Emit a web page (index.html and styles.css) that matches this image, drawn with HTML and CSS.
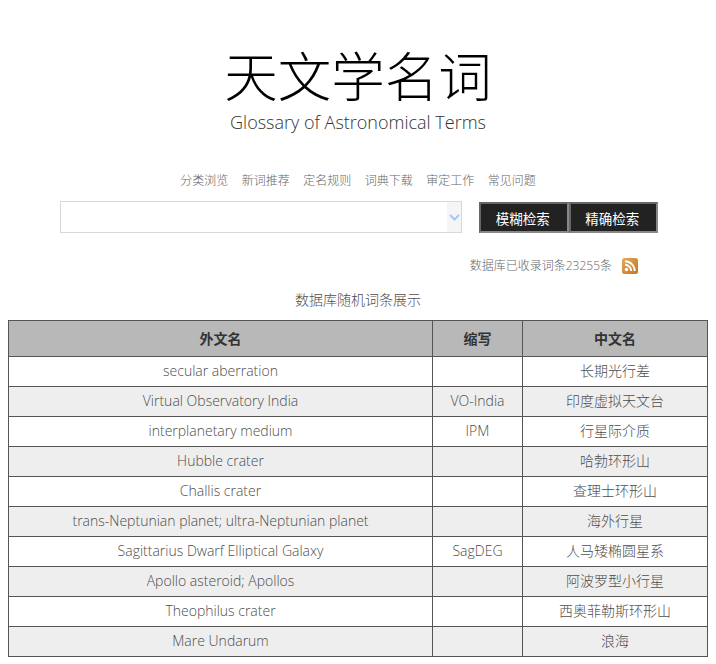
FILE: index.html
```html
<!DOCTYPE html>
<html lang="zh-CN">
<head>
  <meta charset="UTF-8">
  <title>天文学名词</title>
  <link rel="stylesheet" href="styles.css">
</head>
<body>
  <header class="masthead">
    <h1>天文学名词</h1>
    <p class="subtitle">Glossary of Astronomical Terms</p>
  </header>

  <nav class="main-nav">
    <a href="#">分类浏览</a>
    <a href="#">新词推荐</a>
    <a href="#">定名规则</a>
    <a href="#">词典下载</a>
    <a href="#">审定工作</a>
    <a href="#">常见问题</a>
  </nav>

  <form class="search-row">
    <div class="search-box">
      <input type="text" class="search-input">
      <span class="search-arrow">
        <svg width="11" height="7" viewBox="0 0 11 7"><path d="M1 1l4.500 4.500L10 1" fill="none" stroke="#a9c6f2" stroke-width="2"/></svg>
      </span>
    </div>
    <div class="search-buttons">
      <button type="button" class="search-btn">模糊检索</button>
      <button type="button" class="search-btn">精确检索</button>
    </div>
  </form>

  <div class="stats">
    <span>数据库已收录词条23255条</span>
    <svg class="rss" width="16" height="16" viewBox="0 0 16 16">
      <defs>
        <linearGradient id="rss-bg" x1="0" y1="0" x2="1" y2="1">
          <stop offset="0" stop-color="#e2a860"/>
          <stop offset="1" stop-color="#c4761f"/>
        </linearGradient>
      </defs>
      <rect width="16" height="16" rx="2.500" fill="url(#rss-bg)"/>
      <circle cx="4.500" cy="11.500" r="1.700" fill="#fff"/>
      <path d="M3 6.800a6.200 6.200 0 0 1 6.200 6.200M3 3.300a9.700 9.700 0 0 1 9.700 9.700" fill="none" stroke="#fff" stroke-width="2"/>
    </svg>
  </div>

  <h2 class="table-title">数据库随机词条展示</h2>

  <table class="terms">
    <thead>
      <tr><th class="col-en">外文名</th><th class="col-abbr">缩写</th><th>中文名</th></tr>
    </thead>
    <tbody>
      <tr><td>secular aberration</td><td></td><td>长期光行差</td></tr>
      <tr><td>Virtual Observatory India</td><td>VO-India</td><td>印度虚拟天文台</td></tr>
      <tr><td>interplanetary medium</td><td>IPM</td><td>行星际介质</td></tr>
      <tr><td>Hubble crater</td><td></td><td>哈勃环形山</td></tr>
      <tr><td>Challis crater</td><td></td><td>查理士环形山</td></tr>
      <tr><td>trans-Neptunian planet; ultra-Neptunian planet</td><td></td><td>海外行星</td></tr>
      <tr><td>Sagittarius Dwarf Elliptical Galaxy</td><td>SagDEG</td><td>人马矮椭圆星系</td></tr>
      <tr><td>Apollo asteroid; Apollos</td><td></td><td>阿波罗型小行星</td></tr>
      <tr><td>Theophilus crater</td><td></td><td>西奥菲勒斯环形山</td></tr>
      <tr><td>Mare Undarum</td><td></td><td>浪海</td></tr>
    </tbody>
  </table>
</body>
</html>
```

FILE: styles.css
```css
body {
  margin: 0;
  padding: 0 8px;
  background-color: #fff;
  color: #4d4d4d;
  font-family: "Open Sans", "Noto Sans CJK SC", sans-serif;
  font-size: 14px;
  font-weight: 300;
}

.masthead {
  padding-top: 50px;
  text-align: center;
}
.masthead h1 {
  margin: 0;
  color: #000;
  font-family: "Liberation Sans", "Noto Sans CJK SC", sans-serif;
  font-size: 53.500px;
  font-weight: 300;
  line-height: 58px;
}
.subtitle {
  margin: 2px 0 0;
  color: #333;
  font-size: 18px;
  line-height: 24px;
}

.main-nav {
  display: flex;
  justify-content: center;
  gap: 13.500px;
  margin-top: 37px;
  line-height: 20px;
}
.main-nav a {
  color: #666;
  font-size: 12px;
  text-decoration: none;
}

.search-row {
  display: flex;
  margin: 10px 50px 0 52px;
  justify-content: space-between;
}
.search-box {
  display: flex;
  width: 402px;
  height: 32px;
  box-sizing: border-box;
  border: 1px solid #d8d8d8;
}
.search-input {
  flex: 1;
  min-width: 0;
  border: none;
  padding: 0;
  outline: none;
}
.search-arrow {
  display: flex;
  width: 14px;
  align-items: center;
  justify-content: center;
  background-color: #f5f5f5;
}
.search-buttons {
  display: flex;
  padding-top: 1px;
}
.search-btn {
  width: 89.500px;
  height: 31px;
  box-sizing: border-box;
  border: 2px solid;
  border-color: #666 #888 #888 #666;
  background-color: #222;
  color: #fff;
  font-family: inherit;
  font-size: 13.500px;
  font-weight: 400;
  padding: 0 2px 0 0;
}

.stats {
  display: flex;
  justify-content: flex-end;
  align-items: center;
  gap: 10px;
  margin: 25px 70px 0 0;
  font-size: 12px;
  line-height: 16px;
  color: #666;
}
.rss {
  display: block;
}

.table-title {
  margin: 16px 0 0;
  font-size: 14px;
  font-weight: 300;
  line-height: 20px;
  text-align: center;
}

.terms {
  width: 700px;
  margin-top: 10px;
  border-collapse: collapse;
  table-layout: fixed;
  text-align: center;
}
.terms th,
.terms td {
  border: 1px solid #555;
  padding: 0 0 2px;
}
.terms th {
  height: 33px;
  background-color: #b8b8b8;
  color: #333;
  font-size: 14px;
  font-weight: 700;
}
.terms td {
  height: 27px;
}
.terms td:last-child {
  height: 25px;
  padding-bottom: 4px;
}
.terms tbody tr:nth-child(even) {
  background-color: #eee;
}
.col-en {
  width: 423px;
}
.col-abbr {
  width: 89px;
}
```
